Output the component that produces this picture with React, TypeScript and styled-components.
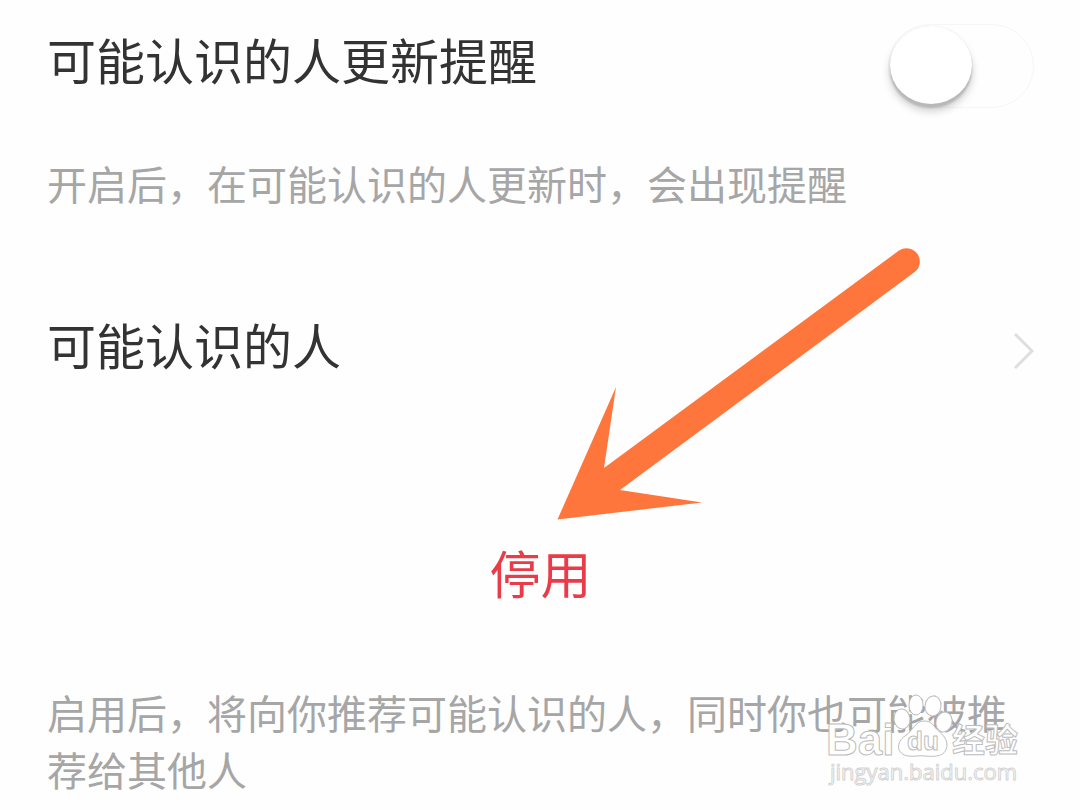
import React, { useState } from "react";
import styled, { createGlobalStyle } from "styled-components";

const GlobalStyle = createGlobalStyle`
  * { box-sizing: border-box; }
  body {
    margin: 0;
    background: #fefefe;
    font-family: "Noto Sans CJK SC", sans-serif;
  }
`;

const Page = styled.main`
  position: relative;
  min-height: 100vh;
  padding: 15px 46px 0 47px;
  overflow: hidden;
`;

const Row = styled.div`
  display: flex;
  align-items: center;
  justify-content: space-between;
  height: 88px;
`;

const LinkRow = styled.a`
  display: flex;
  align-items: center;
  justify-content: space-between;
  height: 88px;
  margin-top: 88px;
  text-decoration: none;
`;

const Title = styled.span`
  font-size: 49px;
  line-height: 88px;
  color: #333;
`;

const Note = styled.p<{ $top: number }>`
  margin: ${(p) => p.$top}px 0 0;
  font-size: 40px;
  line-height: 57px;
  color: #a6a6a6;
`;

const Switch = styled.input`
  appearance: none;
  flex: none;
  display: flex;
  width: 146px;
  height: 84px;
  margin: 14px 0 0;
  border: 1px solid #f6f6f6;
  border-radius: 42px;
  background: #fefefe;
  cursor: pointer;

  &::before {
    content: "";
    width: 82px;
    height: 78px;
    margin: 1px;
    border-radius: 50%;
    background: #fff;
    box-shadow: 0 4px 2px #b8b8b8, 0 7px 9px rgba(0, 0, 0, 0.2), 0 0 1px #ddd;
  }

  &:checked {
    justify-content: flex-end;
    background: #ef3c49;
  }
`;

const Chevron = styled.svg`
  flex: none;
  width: 22px;
  height: 40px;
  margin-top: 14px;
`;

const DisableButton = styled.button`
  display: block;
  margin: 148px auto 0;
  padding: 0;
  border: 0;
  background: none;
  font: 51px/72px "Noto Sans CJK SC", sans-serif;
  color: #ea3b48;
  cursor: pointer;
`;

const Arrow = styled.svg`
  position: absolute;
  top: 240px;
  left: 550px;
  width: 380px;
  height: 290px;
  pointer-events: none;
`;

const Watermark = styled.svg`
  position: absolute;
  right: 50px;
  bottom: 15px;
  width: 210px;
  height: 110px;
  pointer-events: none;
  fill: #fff;
  stroke: #bdbdbd;
  stroke-width: 1px;
  stroke-linejoin: round;
`;

export default function App() {
  const [remind, setRemind] = useState(false);
  return (
    <>
      <GlobalStyle />
      <Page>
        <Row>
          <Title as="label" htmlFor="remind">可能认识的人更新提醒</Title>
          <Switch
            id="remind"
            type="checkbox"
            role="switch"
            checked={remind}
            onChange={(e) => setRemind(e.target.checked)}
          />
        </Row>
        <Note $top={52}>开启后，在可能认识的人更新时，会出现提醒</Note>

        <LinkRow href="#people">
          <Title>可能认识的人</Title>
          <Chevron viewBox="0 0 22 40" aria-hidden="true">
            <path d="M3 3L20 20L3 37" fill="none" stroke="#dedede" strokeWidth="3" />
          </Chevron>
        </LinkRow>

        <DisableButton type="button">停用</DisableButton>
        <Note $top={76}>启用后，将向你推荐可能认识的人，同时你也可能被推荐给其他人</Note>

        <Arrow viewBox="550 240 380 290" aria-hidden="true">
          <path
            d="M557.500 519.500L616 387L604 468L899 250.500A13 13 0 0 1 914 272.500L620 490L702 502.500Z"
            fill="#ff763d"
          />
        </Arrow>

        <Watermark viewBox="820 685 210 110" role="img" aria-label="Baidu 经验">
          <ellipse cx="902" cy="719" rx="8" ry="10" transform="rotate(-8 902 719)" />
          <ellipse cx="916" cy="705" rx="7" ry="10" />
          <ellipse cx="933" cy="706" rx="8" ry="10" transform="rotate(8 933 706)" />
          <ellipse cx="944" cy="722" rx="8" ry="10" transform="rotate(14 944 722)" />
          <path d="M924 721C915 721 913 731 905 736C896 742 896 754 908 756C915 757 919 755 925 756C935 757 947 757 947 744C946 735 938 732 934 726C931 722 928 721 924 721Z" />
          <text x="826" y="755" fontFamily="Liberation Sans, sans-serif" fontWeight="700" fontSize="44">Bai</text>
          <text x="907" y="750" fontFamily="Liberation Sans, sans-serif" fontWeight="700" fontSize="26">du</text>
          <text x="952" y="752" fontFamily="Noto Sans CJK SC, sans-serif" fontWeight="700" fontSize="33">经验</text>
          <text x="830" y="780" fontFamily="Open Sans, sans-serif" fontSize="22" stroke="#d4d4d4">jingyan.baidu.com</text>
        </Watermark>
      </Page>
    </>
  );
}
